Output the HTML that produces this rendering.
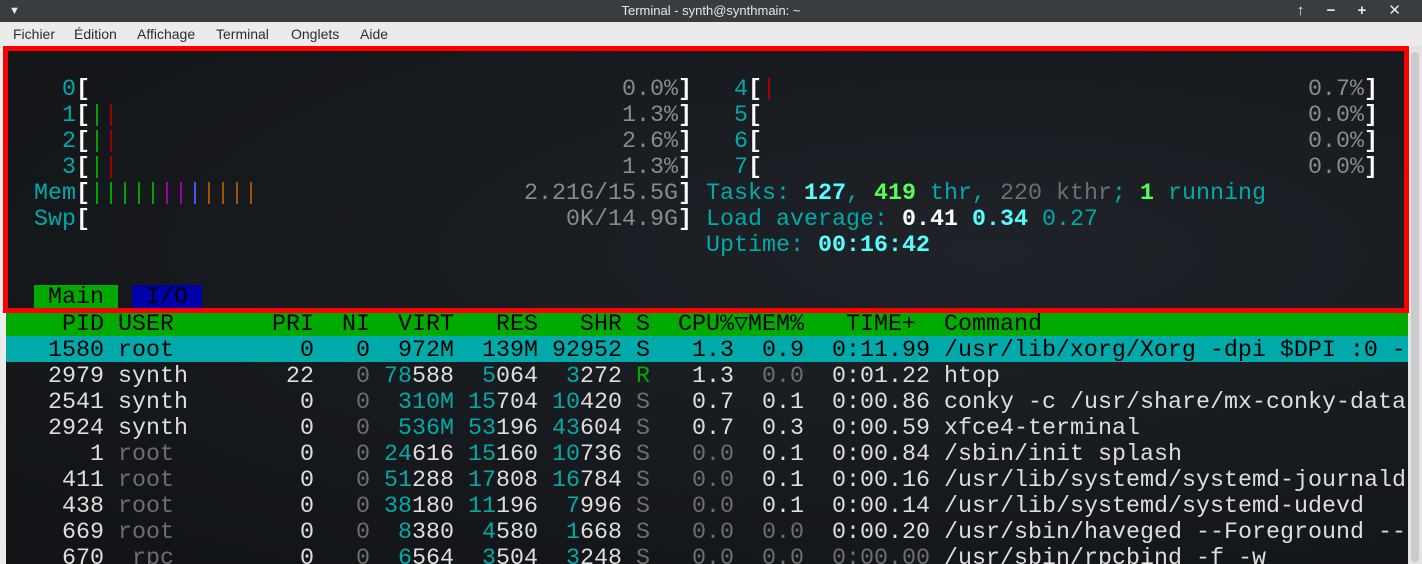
<!DOCTYPE html>
<html><head><meta charset="utf-8"><style>
*{margin:0;padding:0;box-sizing:border-box}
body{width:1422px;height:564px;overflow:hidden;background:#ebebeb;position:relative;font-family:"Liberation Sans","DejaVu Sans",sans-serif}
#title{position:absolute;left:0;top:0;width:1422px;height:22px;background:#3a3d40;color:#e8e8e8;font-size:13px;line-height:22px;text-align:center}
#menu{position:absolute;left:0;top:22px;width:1422px;height:24px;background:#ebebeb;color:#2e2e2e;font-size:14px}
#menu span{position:absolute;top:4px}
#term{position:absolute;left:6px;top:46px;width:1402px;height:518px;background:radial-gradient(ellipse at 70% 40%,#1f2329 0%,#171a1e 50%,#111316 100%);overflow:hidden}
#scroll{position:absolute;left:1408px;top:46px;width:14px;height:518px;background:#e3e3e3}
#thumb{position:absolute;left:1411px;top:52px;width:8px;height:510px;background:#c9cbcc;border-radius:4px}
#box{position:absolute;left:3px;top:46px;width:1406px;height:267px;border:5px solid #ff0000}
.l{position:absolute;left:0;height:26px;width:1402px;font-family:"Liberation Mono",monospace;font-size:23.33px;line-height:26px;white-space:pre;color:#dedede;padding-top:2px}
.c{color:#00aaaa}.w{color:#e6e6e6}.g{color:#6e6e6e}.G{color:#00aa00}.R{color:#aa0000}.M{color:#aa00aa}.B{color:#5555ff}.O{color:#aa5500}
.v{color:#8a8a8a}.k{color:#fff;font-weight:bold}.bc{color:#55ffff;font-weight:bold}.bg{color:#55ff55;font-weight:bold}.bw{color:#fff;font-weight:bold}
.hdr{background:#00aa00;color:#000}
.sel{background:#00aaaa;color:#000}
.tm{background:#00aa00;color:#000}.ti{background:#0000aa;color:#000}
</style></head><body>
<div id="title"><span style="position:absolute;left:9px;top:0;font-size:11px">&#9660;</span>Terminal - synth@synthmain: ~<span style="position:absolute;right:12px;top:0;font-size:15px;font-weight:bold;letter-spacing:9px">↑ − + ✕</span></div>
<div id="menu"><span style="left:13px">Fichier</span><span style="left:74px">Édition</span><span style="left:137px">Affichage</span><span style="left:216px">Terminal</span><span style="left:291px">Onglets</span><span style="left:360px">Aide</span></div>
<div id="term">
<div class="l" style="top:29px"><span class="c">    0</span><span class="k">[</span>                                      <span class="v">0.0%</span><span class="k">]</span>   <span class="c">4</span><span class="k">[</span><span class="R">|</span>                                      <span class="v">0.7%</span><span class="k">]</span></div>
<div class="l" style="top:55px"><span class="c">    1</span><span class="k">[</span><span class="G">|</span><span class="R">|</span>                                    <span class="v">1.3%</span><span class="k">]</span>   <span class="c">5</span><span class="k">[</span>                                       <span class="v">0.0%</span><span class="k">]</span></div>
<div class="l" style="top:81px"><span class="c">    2</span><span class="k">[</span><span class="G">|</span><span class="R">|</span>                                    <span class="v">2.6%</span><span class="k">]</span>   <span class="c">6</span><span class="k">[</span>                                       <span class="v">0.0%</span><span class="k">]</span></div>
<div class="l" style="top:107px"><span class="c">    3</span><span class="k">[</span><span class="G">|</span><span class="R">|</span>                                    <span class="v">1.3%</span><span class="k">]</span>   <span class="c">7</span><span class="k">[</span>                                       <span class="v">0.0%</span><span class="k">]</span></div>
<div class="l" style="top:133px"><span class="c">  Mem</span><span class="k">[</span><span class="G">|||||</span><span class="M">||</span><span class="B">|</span><span class="O">||||</span>                   <span class="v">2.21G/15.5G</span><span class="k">]</span> <span class="c">Tasks: </span><span class="bc">127</span><span class="c">, </span><span class="bg">419</span><span class="c"> thr, </span><span class="g">220 kthr</span><span class="c">; </span><span class="bg">1</span><span class="c"> running</span></div>
<div class="l" style="top:159px"><span class="c">  Swp</span><span class="k">[</span>                                  <span class="v">0K/14.9G</span><span class="k">]</span> <span class="c">Load average: </span><span class="bw">0.41 </span><span class="bc">0.34 </span><span class="c">0.27</span></div>
<div class="l" style="top:185px">                                                  <span class="c">Uptime: </span><span class="bc">00:16:42</span></div>
<div class="l" style="top:237px">  <span class="tm"> Main </span> <span class="ti"> I/O </span></div>
<div class="l hdr" style="top:264px">    PID USER       PRI  NI  VIRT   RES   SHR S  CPU%▽MEM%   TIME+  Command</div>
<div class="l sel" style="top:290px">   1580 root         0   0  972M  139M 92952 S   1.3  0.9  0:11.99 /usr/lib/xorg/Xorg -dpi $DPI :0 -</div>
<div class="l" style="top:316px">   2979 synth       22   <span class="g">0</span> <span class="c">78</span>588  <span class="c">5</span>064  <span class="c">3</span>272 <span class="G">R</span>   1.3  <span class="g">0.0</span>  0:01.22 htop</div>
<div class="l" style="top:342px">   2541 synth        0   <span class="g">0</span>  <span class="c">310M</span> <span class="c">15</span>704 <span class="c">10</span>420 <span class="g">S</span>   0.7  0.1  0:00.86 conky -c /usr/share/mx-conky-data</div>
<div class="l" style="top:368px">   2924 synth        0   <span class="g">0</span>  <span class="c">536M</span> <span class="c">53</span>196 <span class="c">43</span>604 <span class="g">S</span>   0.7  0.3  0:00.59 xfce4-terminal</div>
<div class="l" style="top:394px">      1 <span class="g">root</span>         0   <span class="g">0</span> <span class="c">24</span>616 <span class="c">15</span>160 <span class="c">10</span>736 <span class="g">S</span>   <span class="g">0.0</span>  0.1  0:00.84 /sbin/init splash</div>
<div class="l" style="top:420px">    411 <span class="g">root</span>         0   <span class="g">0</span> <span class="c">51</span>288 <span class="c">17</span>808 <span class="c">16</span>784 <span class="g">S</span>   <span class="g">0.0</span>  0.1  0:00.16 /usr/lib/systemd/systemd-journald</div>
<div class="l" style="top:446px">    438 <span class="g">root</span>         0   <span class="g">0</span> <span class="c">38</span>180 <span class="c">11</span>196  <span class="c">7</span>996 <span class="g">S</span>   <span class="g">0.0</span>  0.1  0:00.14 /usr/lib/systemd/systemd-udevd</div>
<div class="l" style="top:472px">    669 <span class="g">root</span>         0   <span class="g">0</span>  <span class="c">8</span>380  <span class="c">4</span>580  <span class="c">1</span>668 <span class="g">S</span>   <span class="g">0.0</span>  <span class="g">0.0</span>  0:00.20 /usr/sbin/haveged --Foreground --</div>
<div class="l" style="top:498px">    670  <span class="g">rpc</span>         0   <span class="g">0</span>  <span class="c">6</span>564  <span class="c">3</span>504  <span class="c">3</span>248 <span class="g">S</span>   <span class="g">0.0</span>  <span class="g">0.0</span>  <span class="g">0:00.00</span> /usr/sbin/rpcbind -f -w</div>
</div>
<div id="scroll"></div><div id="thumb"></div>
<div id="box"></div>
</body></html>
